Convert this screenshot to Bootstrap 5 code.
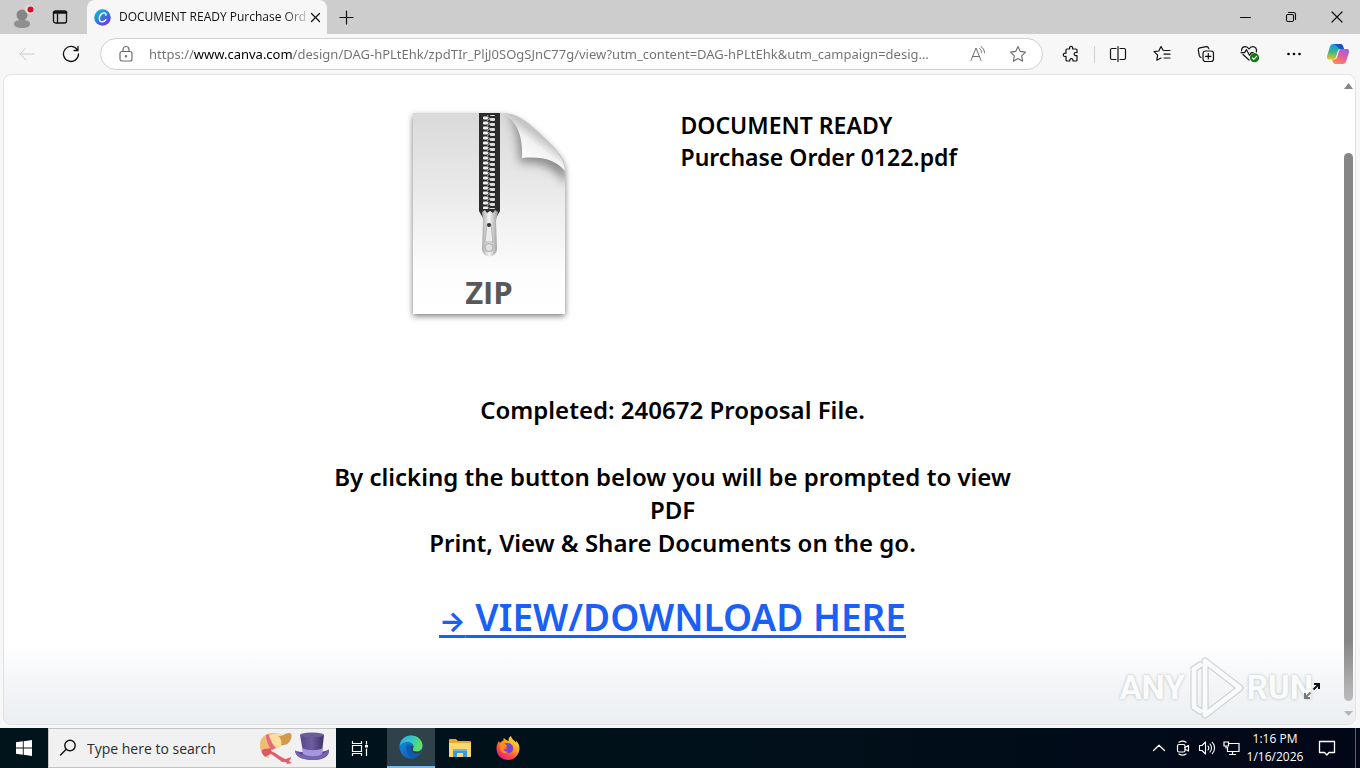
<!DOCTYPE html>
<html lang="en">
<head>
<meta charset="utf-8">
<meta name="viewport" content="width=device-width, initial-scale=1">
<title>DOCUMENT READY Purchase Order</title>
<link href="https://cdn.jsdelivr.net/npm/bootstrap@5.3.0/dist/css/bootstrap.min.css" rel="stylesheet">
<style>
  body { font-family: "Open Sans", "Noto Sans", sans-serif; font-size: 12px; color: #111; background: #f7f7f7; }
  svg { display: block; flex: none; }
  button { background: none; border: 0; padding: 0; color: inherit; }
  .line-icon { fill: none; stroke: currentColor; stroke-linecap: round; stroke-linejoin: round; }

  /* tab strip */
  .tab-strip { height: 34px; background: #cdcdcd; padding-left: 3px; }
  .strip-btn { width: 38px; height: 34px; }
  .tab-open { width: 240px; height: 34px; margin-left: 8px; padding: 0 6px 0 7px; background: #f7f7f7; border-radius: 8px 8px 0 0; }
  .tab-title { line-height: 18px; background: linear-gradient(90deg, #111 88%, #c4c4c4); background-clip: text; -webkit-background-clip: text; color: transparent; }
  .win-btn { width: 46px; height: 34px; }

  /* toolbar */
  .tool-bar { height: 40px; padding-left: 5px; }
  .tool-btn { width: 44px; height: 32px; }
  .address { height: 32px; border: 1px solid #d0d0d0; border-radius: 16px; margin: 0 6px 0 7px; color: #6e6e6e; }
  .address .tool-btn { width: 40px; }
  .address input { border: 0; outline: 0; padding: 0; min-width: 0; height: 24px; margin: 0 24px 0 6px; font-family: "Noto Sans", sans-serif; font-size: 13px; text-overflow: ellipsis;
    color: transparent; background: linear-gradient(90deg, #707070 45px, #000 45px, #000 144px, #707070 144px); background-clip: text; -webkit-background-clip: text; }
  .tool-rule { width: 1px; height: 17px; margin: 0 1px; background: #cfcfcf; }

  /* page */
  .page-frame { margin: 0 4px 3px 3px; border: 1px solid #e2e2e4; border-radius: 8px; overflow: hidden; background: linear-gradient(0deg, #eceff2 0, #f3f5f7 40px, #fff 78px); }
  .sheet { max-width: 680px; font-family: "Noto Sans", sans-serif; font-weight: 600; color: #000; padding-top: 25px; }
  .doc-name { font-size: 23px; line-height: 32px; padding: 9px 0 0 8px; }
  .doc-icon { padding-right: 26px; }
  .message { font-size: 24px; line-height: 33px; margin-top: 63px; }
  .message p { margin-bottom: 34px; }
  .download { font-size: 37px; line-height: 48px; color: #1b60f5; text-decoration-thickness: 3px; text-underline-offset: 4px; text-decoration-skip-ink: none; }
  .download .arrow { font-family: Inter, sans-serif; font-size: 28px; font-weight: 700; }
  .scroll-col { width: 14px; padding: 8px 0; }
  .scroll-thumb { width: 9px; margin-top: 64px; margin-bottom: 10px; border-radius: 5px; background: linear-gradient(0deg, #bcbcbc 0, #868686 60px); }
  .brand { position: absolute; right: 42px; bottom: 3px; color: #fafbfb; font: 700 33px/64px Roboto, sans-serif; text-shadow: 0 0 3px #b4b8bb; }
  .expand { position: absolute; right: 34px; bottom: 24px; }

  /* taskbar */
  .task-bar { height: 40px; background: linear-gradient(90deg, #00141c, #01101a 60%, #020718); color: #fff; }
  .task-btn { width: 48px; height: 40px; }
  .task-btn.current { margin: 0 1px 0 3px; background: #2f424a; border-bottom: 2px solid #76b9ed; }
  .search { width: 288px; height: 40px; background: #f1f1f1; border: 1px solid #c5c5c5; border-right: 0; color: #111; }
  .search input { border: 0; outline: 0; background: none; padding: 0; min-width: 0; font-size: 14px; color: #2c2c2c; }
  .search input::placeholder { color: #2c2c2c; opacity: 1; }
  .tray-btn { width: 24px; height: 40px; }
  .notify { width: 40px; }
  .clock { width: 64px; line-height: 18px; }
  .desk-edge { width: 5px; height: 40px; border-left: 1px solid #5b6170; }
</style>
</head>
<body class="min-vh-100 d-flex flex-column">

<header>
  <div class="tab-strip d-flex align-items-center">
    <button class="strip-btn d-flex align-items-center justify-content-center" aria-label="Profile">
      <svg width="24" height="26" viewBox="0 0 24 26"><circle cx="12" cy="11" r="5.5" fill="#858585"/><path d="M4 20c0-3 3-4 8-4s8 1 8 4c0 2.700-3.500 4-8 4s-8-1.300-8-4z" fill="#8f8f8d"/><circle cx="19.500" cy="5.500" r="4.500" fill="#dedede"/><circle cx="20.500" cy="5.500" r="3" fill="#d50f25"/></svg>
    </button>
    <button class="strip-btn d-flex align-items-center justify-content-center" aria-label="Tab actions">
      <svg class="line-icon" width="16" height="16" viewBox="0 0 16 16" stroke-width="1.300"><rect x="1.500" y="2" width="13" height="12" rx="2"/><path d="M2 3.500h12" stroke-width="2.500"/><path d="M5.500 5v9"/></svg>
    </button>
    <div class="tab-open d-flex align-items-center">
      <svg class="me-2" width="17" height="17" viewBox="0 0 17 17"><defs><linearGradient id="cv" x1="0" y1="0" x2=".8" y2="1"><stop offset="0" stop-color="#11c5cf"/><stop offset=".45" stop-color="#2a87dc"/><stop offset="1" stop-color="#7a2be4"/></linearGradient></defs><circle cx="8.500" cy="8.500" r="8.300" fill="url(#cv)"/><path d="M11.800 6.300c.5-1.600-.5-2.500-1.800-2.400-2.600.2-4.700 3-4.700 5.500 0 2 1.100 3.400 2.900 3.400 1.500 0 2.800-.9 3.700-2.200" fill="none" stroke="#fff" stroke-width="1.400" stroke-linecap="round"/></svg>
      <span class="tab-title text-nowrap">DOCUMENT READY Purchase Ord</span>
      <button class="ms-auto p-1" aria-label="Close tab"><svg class="line-icon" width="11" height="11" viewBox="0 0 11 11" stroke-width="1.200"><path d="M1.500 1.500l8 8m0-8l-8 8"/></svg></button>
    </div>
    <button class="strip-btn d-flex align-items-center justify-content-center" aria-label="New tab"><svg class="line-icon" width="15" height="15" viewBox="0 0 15 15" stroke-width="1.200"><path d="M7.500 1v13M1 7.500h13"/></svg></button>
    <div class="ms-auto d-flex">
      <button class="win-btn d-flex align-items-center justify-content-center" aria-label="Minimize"><svg class="line-icon" width="11" height="11" viewBox="0 0 11 11"><path d="M.5 5.500h10"/></svg></button>
      <button class="win-btn d-flex align-items-center justify-content-center" aria-label="Restore"><svg class="line-icon" width="12" height="12" viewBox="0 0 12 12" stroke-width="1.100"><rect x="1.500" y="3.500" width="7" height="7" rx="1.500"/><path d="M3.500 1.500h5a2 2 0 0 1 2 2v5"/></svg></button>
      <button class="win-btn d-flex align-items-center justify-content-center" aria-label="Close"><svg class="line-icon" width="12" height="12" viewBox="0 0 12 12" stroke-width="1.200"><path d="M1 1l10 10M11 1L1 11"/></svg></button>
    </div>
  </div>

  <nav class="tool-bar d-flex align-items-center" aria-label="Browser toolbar">
    <button class="tool-btn d-flex align-items-center justify-content-center" aria-label="Back"><svg class="line-icon" width="18" height="16" viewBox="0 0 18 16" stroke="#cdcdcd" style="color:#cdcdcd"><path d="M16 8H2m6-6L2 8l6 6"/></svg></button>
    <button class="tool-btn d-flex align-items-center justify-content-center" aria-label="Refresh"><svg class="line-icon" width="18" height="18" viewBox="0 0 18 18" stroke-width="1.300"><path d="M15.500 5.200A7.500 7.500 0 1 0 16.500 9M16 1.500v4h-4"/></svg></button>
    <div class="address flex-grow-1 d-flex align-items-center bg-white">
      <svg class="line-icon ms-3 me-2" width="18" height="18" viewBox="0 0 18 18" stroke-width="1.200"><rect x="3" y="6.500" width="12" height="9.500" rx="2"/><path d="M6 6.500V4.500a3 3 0 0 1 6 0v2"/><circle cx="9" cy="11.300" r=".6" fill="currentColor"/></svg>
      <input class="flex-grow-1" type="text" aria-label="Address" value="https://www.canva.com/design/DAG-hPLtEhk/zpdTIr_PljJ0SOgSJnC77g/view?utm_content=DAG-hPLtEhk&amp;utm_campaign=designshare">
      <button class="tool-btn d-flex align-items-center justify-content-center" aria-label="Read aloud"><svg class="line-icon" width="18" height="18" viewBox="0 0 18 18"><path d="M2 15.500L7 3l5 12.500M3.700 11.500h6.600M10.500 3.500c1.300.9 2 2.300 2 4M12 1.500c2.200 1.500 3.500 3.700 3.500 6.300"/></svg></button>
      <button class="tool-btn d-flex align-items-center justify-content-center me-1" aria-label="Add to favorites"><svg class="line-icon" width="18" height="18" viewBox="0 0 18 18" stroke-width="1.100"><path d="M9 1.500l2.300 4.900 5.200.7-3.800 3.700.9 5.400L9 13.600l-4.600 2.600.9-5.400-3.800-3.700 5.200-.7z"/></svg></button>
    </div>
    <button class="tool-btn d-flex align-items-center justify-content-center" aria-label="Extensions"><svg class="line-icon" width="18" height="18" viewBox="0 0 18 18" stroke-width="1.200"><path d="M5 4h2.600c-.3-1.700.3-2.700 1.500-2.700S11 2.300 10.600 4H14c.6 0 1 .4 1 1v2.600c-1.900-.3-2.800.3-2.800 1.500s.9 1.800 2.800 1.500V15c0 .600-.4 1-1 1h-3c.2-1.500-.4-2.400-1.600-2.400S7.600 14.500 7.800 16H5c-.6 0-1-.4-1-1v-3.600c-1.700.3-2.700-.3-2.700-1.600S2.300 7.900 4 8.200V5c0-.6.4-1 1-1z"/></svg></button>
    <span class="tool-rule"></span>
    <button class="tool-btn d-flex align-items-center justify-content-center" aria-label="Split screen"><svg class="line-icon" width="18" height="18" viewBox="0 0 18 18" stroke-width="1.200"><path d="M9 1.500v15M7 3.500H3c-.8 0-1.500.7-1.500 1.500v8c0 .8.7 1.500 1.500 1.500h4M11 3.500h4c.8 0 1.500.7 1.500 1.500v8c0 .8-.7 1.500-1.500 1.500h-4"/></svg></button>
    <button class="tool-btn d-flex align-items-center justify-content-center" aria-label="Favorites"><svg class="line-icon" width="18" height="18" viewBox="0 0 18 18" stroke-width="1.200"><path d="M10.300 5.500L8 1.500 5.800 6l-4.700.7 3.500 3.500-.8 5L8 13M11 9.200h6M11 13h6M11.500 5.500H17"/></svg></button>
    <button class="tool-btn d-flex align-items-center justify-content-center" aria-label="Collections"><svg class="line-icon" width="18" height="18" viewBox="0 0 18 18" stroke-width="1.200"><rect x="6" y="6" width="10.500" height="10.500" rx="2.500"/><path d="M11.300 8.500v5.500M8.500 11.300H14M4 12.300c-1-.2-1.400-.8-1.700-1.700L1.300 5.200c-.2-1.200.4-2 1.500-2.300l6.500-1.300c1.200-.2 2 .4 2.500 2"/></svg></button>
    <button class="tool-btn d-flex align-items-center justify-content-center" aria-label="Browser essentials"><svg class="line-icon" width="20" height="18" viewBox="0 0 20 18" stroke-width="1.200"><path d="M9 15L3 9.500M1.600 5.700C1.400 3.300 3 1.600 5.200 1.600 7 1.600 8.300 2.800 9 4c.7-1.200 2-2.400 3.800-2.400 2.500 0 4.400 2.200 3.500 5.400M1 7.700h3.500l2-3 3 5.600 1.700-2.600h2"/><circle cx="14.500" cy="12.700" r="4.600" fill="#107c10" stroke="none"/><path d="M12.300 12.800l1.500 1.500 2.800-2.900" stroke="#fff"/></svg></button>
    <button class="tool-btn d-flex align-items-center justify-content-center" aria-label="Settings and more"><svg width="16" height="4" viewBox="0 0 16 4"><circle cx="2.500" cy="2" r="1.300"/><circle cx="8" cy="2" r="1.300"/><circle cx="13.500" cy="2" r="1.300"/></svg></button>
    <button class="tool-btn d-flex align-items-center justify-content-center" aria-label="Copilot">
      <svg width="24" height="22" viewBox="0 0 24 22"><defs><linearGradient id="ca" x1=".3" y1="0" x2=".2" y2="1"><stop offset="0" stop-color="#1597ea"/><stop offset=".5" stop-color="#39b58a"/><stop offset="1" stop-color="#f4c51c"/></linearGradient><linearGradient id="cb" x1=".8" y1="0" x2=".3" y2="1"><stop offset="0" stop-color="#a35bea"/><stop offset=".5" stop-color="#e0609a"/><stop offset="1" stop-color="#ff8a4c"/></linearGradient></defs><path d="M14.500 1c1.500 0 2.200 1 2.600 2.300l.8 2.700h-3.300c-1.700 0-2.500 1-3 2.500L10 14c-.5 1.600-1.200 2.500-2.800 2.500H3.500C1 16.500.6 14.500 1.200 12.500L3.800 4C4.400 2 5.500 1 7.500 1z" fill="url(#ca)"/><path d="M8 1h6.500c1.500 0 2.200 1 2.600 2.300l.8 2.700h-3.300c-1.300 0-2-.5-2.500-2z" fill="#1b50c8"/><path d="M9.500 21c-1.500 0-2.200-1-2.600-2.300l-.7-2.200h2c1.700 0 2.500-1 3-2.500L13 8c.4-1.400 1.200-2 2.800-2h4.700c2.500 0 2.900 2 2.300 4l-2.600 8c-.6 2-1.700 3-3.700 3z" fill="url(#cb)"/></svg>
    </button>
  </nav>
</header>

<main class="page-frame position-relative flex-grow-1 d-flex">
  <div class="flex-grow-1">
    <div class="sheet mx-auto">
      <div class="row g-0">
        <div class="col-6 doc-icon d-flex justify-content-center">
          <svg width="180" height="230" viewBox="0 0 180 230" role="img" aria-label="ZIP file">
            <defs>
              <linearGradient id="pg" x1="0" y1="0" x2="0" y2="1"><stop offset="0" stop-color="#dadada"/><stop offset=".35" stop-color="#e8e8e8"/><stop offset=".8" stop-color="#fdfdfd"/><stop offset="1" stop-color="#fff"/></linearGradient>
              <linearGradient id="fold" x1=".2" y1=".9" x2=".6" y2=".4"><stop offset="0" stop-color="#d8d8d8"/><stop offset=".25" stop-color="#fff"/><stop offset=".75" stop-color="#f2f2f2"/><stop offset="1" stop-color="#c6c6c6"/></linearGradient>
              <linearGradient id="pull" x1="0" y1="0" x2="1" y2="0"><stop offset="0" stop-color="#aaa"/><stop offset=".45" stop-color="#f5f5f5"/><stop offset="1" stop-color="#999"/></linearGradient>
              <filter id="sh" x="-15%" y="-15%" width="130%" height="130%"><feGaussianBlur stdDeviation="3"/></filter>
              <filter id="sh2" x="-30%" y="-30%" width="160%" height="160%"><feGaussianBlur stdDeviation="5"/></filter>
              <clipPath id="pc"><path d="M13 13h88c15 0 27 9 42 24 14 13 22 22 22 32v145H13z"/></clipPath>
              <pattern id="teeth" x="83" y="16" width="12" height="5" patternUnits="userSpaceOnUse"><rect x="0" y=".500" width="5" height="3" rx="1" fill="#f2f2f2"/><rect x="7" y="2" width="5" height="3" rx="1" fill="#ddd"/><path d="M4 1l4 2M4 4.500l4-2" stroke="#ccc" stroke-width=".8"/></pattern>
            </defs>
            <path d="M13 16h88c15 0 27 9 42 24 14 13 22 22 22 32v144H13z" fill="#777" filter="url(#sh)"/>
            <path d="M13 13h88c15 0 27 9 42 24 14 13 22 22 22 32v145H13z" fill="url(#pg)"/>
            <g clip-path="url(#pc)"><path d="M108 13c8 10 10 26 12 50 20-2 35 4 47 22V13z" fill="#777" opacity=".8" filter="url(#sh2)"/></g>
            <path d="M102 13c16 0 27 9 41 24 14 13 22 22 22 34-9-11-23-15-43-13 1-20-4-37-20-45z" fill="url(#fold)"/>
            <path d="M79 13h21v98l-4 7H83l-4-7z" fill="#2b2b2b"/>
            <rect x="83" y="15" width="12" height="94" fill="url(#teeth)"/>
            <path d="M82 112l3-2 2 3 3-2 3 2 2-3 3 2-2 9 1 28a7 7 0 0 1-15 0l1-28z" fill="url(#pull)"/><path d="M87 124l-2 18h8l-2-18z" fill="#ececec" stroke="#999" stroke-width=".6"/><circle cx="89" cy="125" r="2" fill="#333"/><circle cx="89" cy="147.500" r="4" fill="#e2e2e2" stroke="#aaa"/>
            <text x="89" y="204" text-anchor="middle" font-family="Open Sans, sans-serif" font-weight="700" font-size="31" fill="#585858">ZIP</text>
          </svg>
        </div>
        <div class="col-6 doc-name">DOCUMENT READY<br>Purchase Order 0122.pdf</div>
      </div>
      <div class="message text-center">
        <p>Completed: 240672 Proposal File.</p>
        <p>By clicking the button below you will be prompted to view PDF<br>Print, View &amp; Share Documents on the go.</p>
        <a class="download" href="#"><span class="arrow">→</span> VIEW/DOWNLOAD HERE</a>
      </div>
    </div>
  </div>
  <div class="scroll-col d-flex flex-column align-items-center" aria-hidden="true">
    <svg width="9" height="6" viewBox="0 0 9 6"><path d="M0 6l4.500-6L9 6z" fill="#858585"/></svg>
    <div class="scroll-thumb flex-grow-1"></div>
    <svg width="9" height="5" viewBox="0 0 9 5"><path d="M0 0l4.500 5L9 0z" fill="#b5b5b5"/></svg>
  </div>
  <div class="brand d-flex align-items-center">
    <span>ANY</span>
    <svg width="62" height="66" viewBox="0 0 62 66"><g fill="none" stroke-linejoin="round" stroke-linecap="round"><g stroke="#c9cdd0" stroke-width="7"><path d="M20 6v54l35-27zM9 14v38l6 4M9 14l6-4"/></g><g stroke="#f9fafa" stroke-width="5"><path d="M20 6v54l35-27zM9 14v38l6 4M9 14l6-4"/></g></g></svg>
    <span>RUN</span>
  </div>
  <button class="expand" aria-label="Full screen"><svg width="18" height="18" viewBox="0 0 18 18" fill="none" stroke-width="2"><path d="M10.500 7.500L16 2M11 2h5v5" stroke="#111"/><path d="M7.500 10.500L2 16M2 11v5h5" stroke="#777"/></svg></button>
</main>

<footer class="task-bar d-flex align-items-center">
  <button class="task-btn d-flex align-items-center justify-content-center" aria-label="Start"><svg width="16" height="16" viewBox="0 0 16 16" fill="#fff"><path d="M0 2.300L6.800 1.300v6.200H0zM7.700 1.200L16 0v7.500H7.700zM0 8.400h6.800v6.300L0 13.700zM7.700 8.400H16V16l-8.300-1.200z"/></svg></button>
  <div class="search d-flex align-items-center ps-2 pe-1">
    <svg class="line-icon me-2" width="22" height="20" viewBox="0 0 22 20" stroke-width="1.400"><circle cx="13" cy="7.500" r="5.200"/><path d="M9 11.500L3.500 17"/></svg>
    <input class="flex-grow-1" type="text" aria-label="Search" placeholder="Type here to search">
    <svg width="74" height="34" viewBox="0 0 74 34">
      <path d="M2 15C1 7 8 1 17 2c5 0 8 2 10 6-2 6-6 9-12 10-4 2-5 5-4 9C6 26 2 21 2 15z" fill="#efbd72"/><path d="M8 10C9 4 16 1 22 3c4 2 4 9 1 13-5 3-12 2-15-6z" fill="#fbdda0"/><path d="M20 5c4 1 7-3 11-3 3 0 3 3 2 6-2 5-6 7-10 6 1-3 0-7-3-9z" fill="#d39a4b"/><path d="M10 3c2 3 3 9 8 14l-4 2C9 14 8 8 8 4z" fill="#e66b74"/><path d="M4 19c3-2 6-1 9-2 1 3-1 4 2 6-3 0-5 1-8 3-1-2-4-3-3-7z" fill="#dc5868"/><path d="M13 20c6 2 10 7 15 8l5-2c0 2-1 3-2 4l3 2-5 1-1-2-4 0c-3-3-7-5-12-9z" fill="#e06070"/>
      <defs><linearGradient id="hat" x1="0" y1="0" x2="1" y2="0"><stop offset="0" stop-color="#58478a"/><stop offset=".5" stop-color="#6d5c9f"/><stop offset="1" stop-color="#3d3166"/></linearGradient></defs>
      <path d="M38 20c5 2 27 2 32-1 3 5-4 10-15 10S36 25 38 20z" fill="#5b4a92"/><path d="M37 19c6 8 28 8 34-1 1 6-6 11-16 11s-19-4-18-10z" fill="#7564b0"/><path d="M42 4l3 17c5 4 15 4 19 0l2-17z" fill="url(#hat)"/><path d="M44 17c6 3 15 3 21 0l-1 6c-4 3-14 3-19 0z" fill="#a896dc"/><ellipse cx="54" cy="4" rx="12" ry="2.500" fill="#6a5c96"/>
    </svg>
  </div>
  <button class="task-btn d-flex align-items-center justify-content-center" aria-label="Task view"><svg width="18" height="17" viewBox="0 0 18 17" fill="none" stroke="#fff" stroke-width="1.200"><path d="M1.500 1v2.500h9V1M1.500 16v-2.500h9V16M1.500 5.500h9v6h-9zM15.500 1v3.500M15.500 8.500V16"/><path d="M14 5h3v2.500h-3z" fill="#fff" stroke="none"/></svg></button>
  <button class="task-btn current d-flex align-items-center justify-content-center" aria-label="Microsoft Edge">
    <svg width="24" height="24" viewBox="0 0 24 24"><defs><linearGradient id="e1" x1="0" y1="0" x2="1" y2=".3"><stop offset="0" stop-color="#27b3e3"/><stop offset=".5" stop-color="#30c4c8"/><stop offset="1" stop-color="#5fe05f"/></linearGradient><linearGradient id="e2" x1="0" y1="0" x2="1" y2="1"><stop offset="0" stop-color="#1a8fdf"/><stop offset="1" stop-color="#0b4fa5"/></linearGradient></defs><circle cx="12" cy="12" r="11.500" fill="url(#e2)"/><path d="M.6 11C1.500 4.500 6.500.5 12 .5c7 0 11.500 5 11.500 10 0 4-3 6-6 6-2 0-4-.7-4-1.700 0-.7 1.200-1.300 1.200-3C14.700 9 12 7 8.500 7 4.500 7 1.500 9 .6 11z" fill="url(#e1)"/><path d="M8.500 9c-3 5-.5 12 6 14 4-1 7-4 7.700-6-4 2-9 2-10.500-3-.8-3 .3-4-3.200-5z" fill="#0c5bb0"/><path d="M22 17.500c-4 2-9 1.500-10.300-3.500-.3-1.500 0-2.500.8-3.500 1.500.8 2 2 1.300 3.200-.8 1.800.5 2.800 3.500 3 3 .3 5-1 6-2z" fill="#2f424a"/></svg>
  </button>
  <button class="task-btn d-flex align-items-center justify-content-center" aria-label="File Explorer">
    <svg width="22" height="20" viewBox="0 0 22 20"><path d="M0 2c0-.6.400-1 1-1h6l2 2h12c.6 0 1 .4 1 1v4H0z" fill="#e9a92e"/><path d="M0 5h22v13c0 .6-.4 1-1 1H1c-.6 0-1-.4-1-1z" fill="#fdd96c"/><path d="M4 19v-8h14v8h-4v-4H8v4z" fill="#3a9ad9"/><path d="M4 11h14v2H4z" fill="#64b9ec"/></svg>
  </button>
  <button class="task-btn d-flex align-items-center justify-content-center" aria-label="Firefox">
    <svg width="24" height="24" viewBox="0 0 24 24"><defs><linearGradient id="ff" x1=".9" y1="0" x2=".2" y2="1"><stop offset="0" stop-color="#fff04a"/><stop offset=".4" stop-color="#ffa31f"/><stop offset=".7" stop-color="#ff4a45"/><stop offset="1" stop-color="#e61587"/></linearGradient></defs><path d="M3 5c.3 1 .6 1.400 1 2C5 5.500 6 5 7.500 4.500 7.300 3.500 7.600 2.500 8 2c1 1.600 3 2.600 5 3C12 3 13 1 15 0c.5 3 3 4 5 6.500.3-.8.200-1.500 0-2C23.500 8 24 12 23 15.500 21.500 20.500 17 24 12 24 5.500 24 .5 19 .5 12.500.5 9.500 1.500 7 3 5z" fill="url(#ff)"/><path d="M8 8c3-2 8-1 9 3 1 3.500-1.500 6-5 6-3 0-5-2-5-3.500 2 .5 3-.3 4.500-1.500C10 12 8 11 8 8z" fill="#7543d8"/><path d="M4 8c3-2 6 0 7 2 0 1-1.500 1.500-3 2-1 1.500 0 3 2 3.500 1 .2 1.500.2 2 .2C10 18 6.500 17.500 5 15 3.500 12.500 3.500 10 4 8z" fill="#ff8a22"/></svg>
  </button>

  <div class="ms-auto d-flex align-items-center">
    <button class="tray-btn d-flex align-items-center justify-content-center" aria-label="Hidden icons"><svg class="line-icon" width="14" height="8" viewBox="0 0 14 8" stroke-width="1.300"><path d="M1.500 6.500L7 1.200l5.500 5.300"/></svg></button>
    <button class="tray-btn d-flex align-items-center justify-content-center" aria-label="Meet now"><svg class="line-icon" width="14" height="16" viewBox="0 0 14 16" stroke-width="1.200"><rect x="1.500" y="4.500" width="7.500" height="7.500" rx="1.500"/><path d="M9 7.500l3.500-2v5.500L9 9.300M3 2.200c2-1.300 5-1.300 7 0M3 14c2 1.300 5 1.300 7 0"/></svg></button>
    <button class="tray-btn d-flex align-items-center justify-content-center" aria-label="Volume"><svg class="line-icon" width="18" height="16" viewBox="0 0 18 16" stroke-width="1.100"><path d="M1.500 5.500H4l3.500-3.500v12L4 10.500H1.500zM10 6c.8 1 .8 3 0 4M12 4c2 2.200 2 5.800 0 8M14.300 2.300c3 3 3 8.400 0 11.400"/></svg></button>
    <button class="tray-btn d-flex align-items-center justify-content-center" aria-label="Network"><svg width="17" height="15" viewBox="0 0 17 15" fill="none" stroke="#fff" stroke-width="1.200"><path d="M6 2.500h10v8H4.500V6M9.500 10.500v3M6 13.500h7M1 1h4.500v4H1zM3 5v2.500"/></svg></button>
    <div class="clock text-center text-nowrap">1:16 PM<br>1/16/2026</div>
    <button class="task-btn notify d-flex align-items-center justify-content-center me-2" aria-label="Notifications"><svg class="line-icon" width="18" height="18" viewBox="0 0 18 18" stroke-width="1.300"><path d="M1.500 2.500h15v11H11L8.800 16l-2.300-2.500h-5z"/></svg></button>
    <div class="desk-edge"></div>
  </div>
</footer>

<script src="https://cdn.jsdelivr.net/npm/bootstrap@5.3.0/dist/js/bootstrap.bundle.min.js"></script>
</body>
</html>
